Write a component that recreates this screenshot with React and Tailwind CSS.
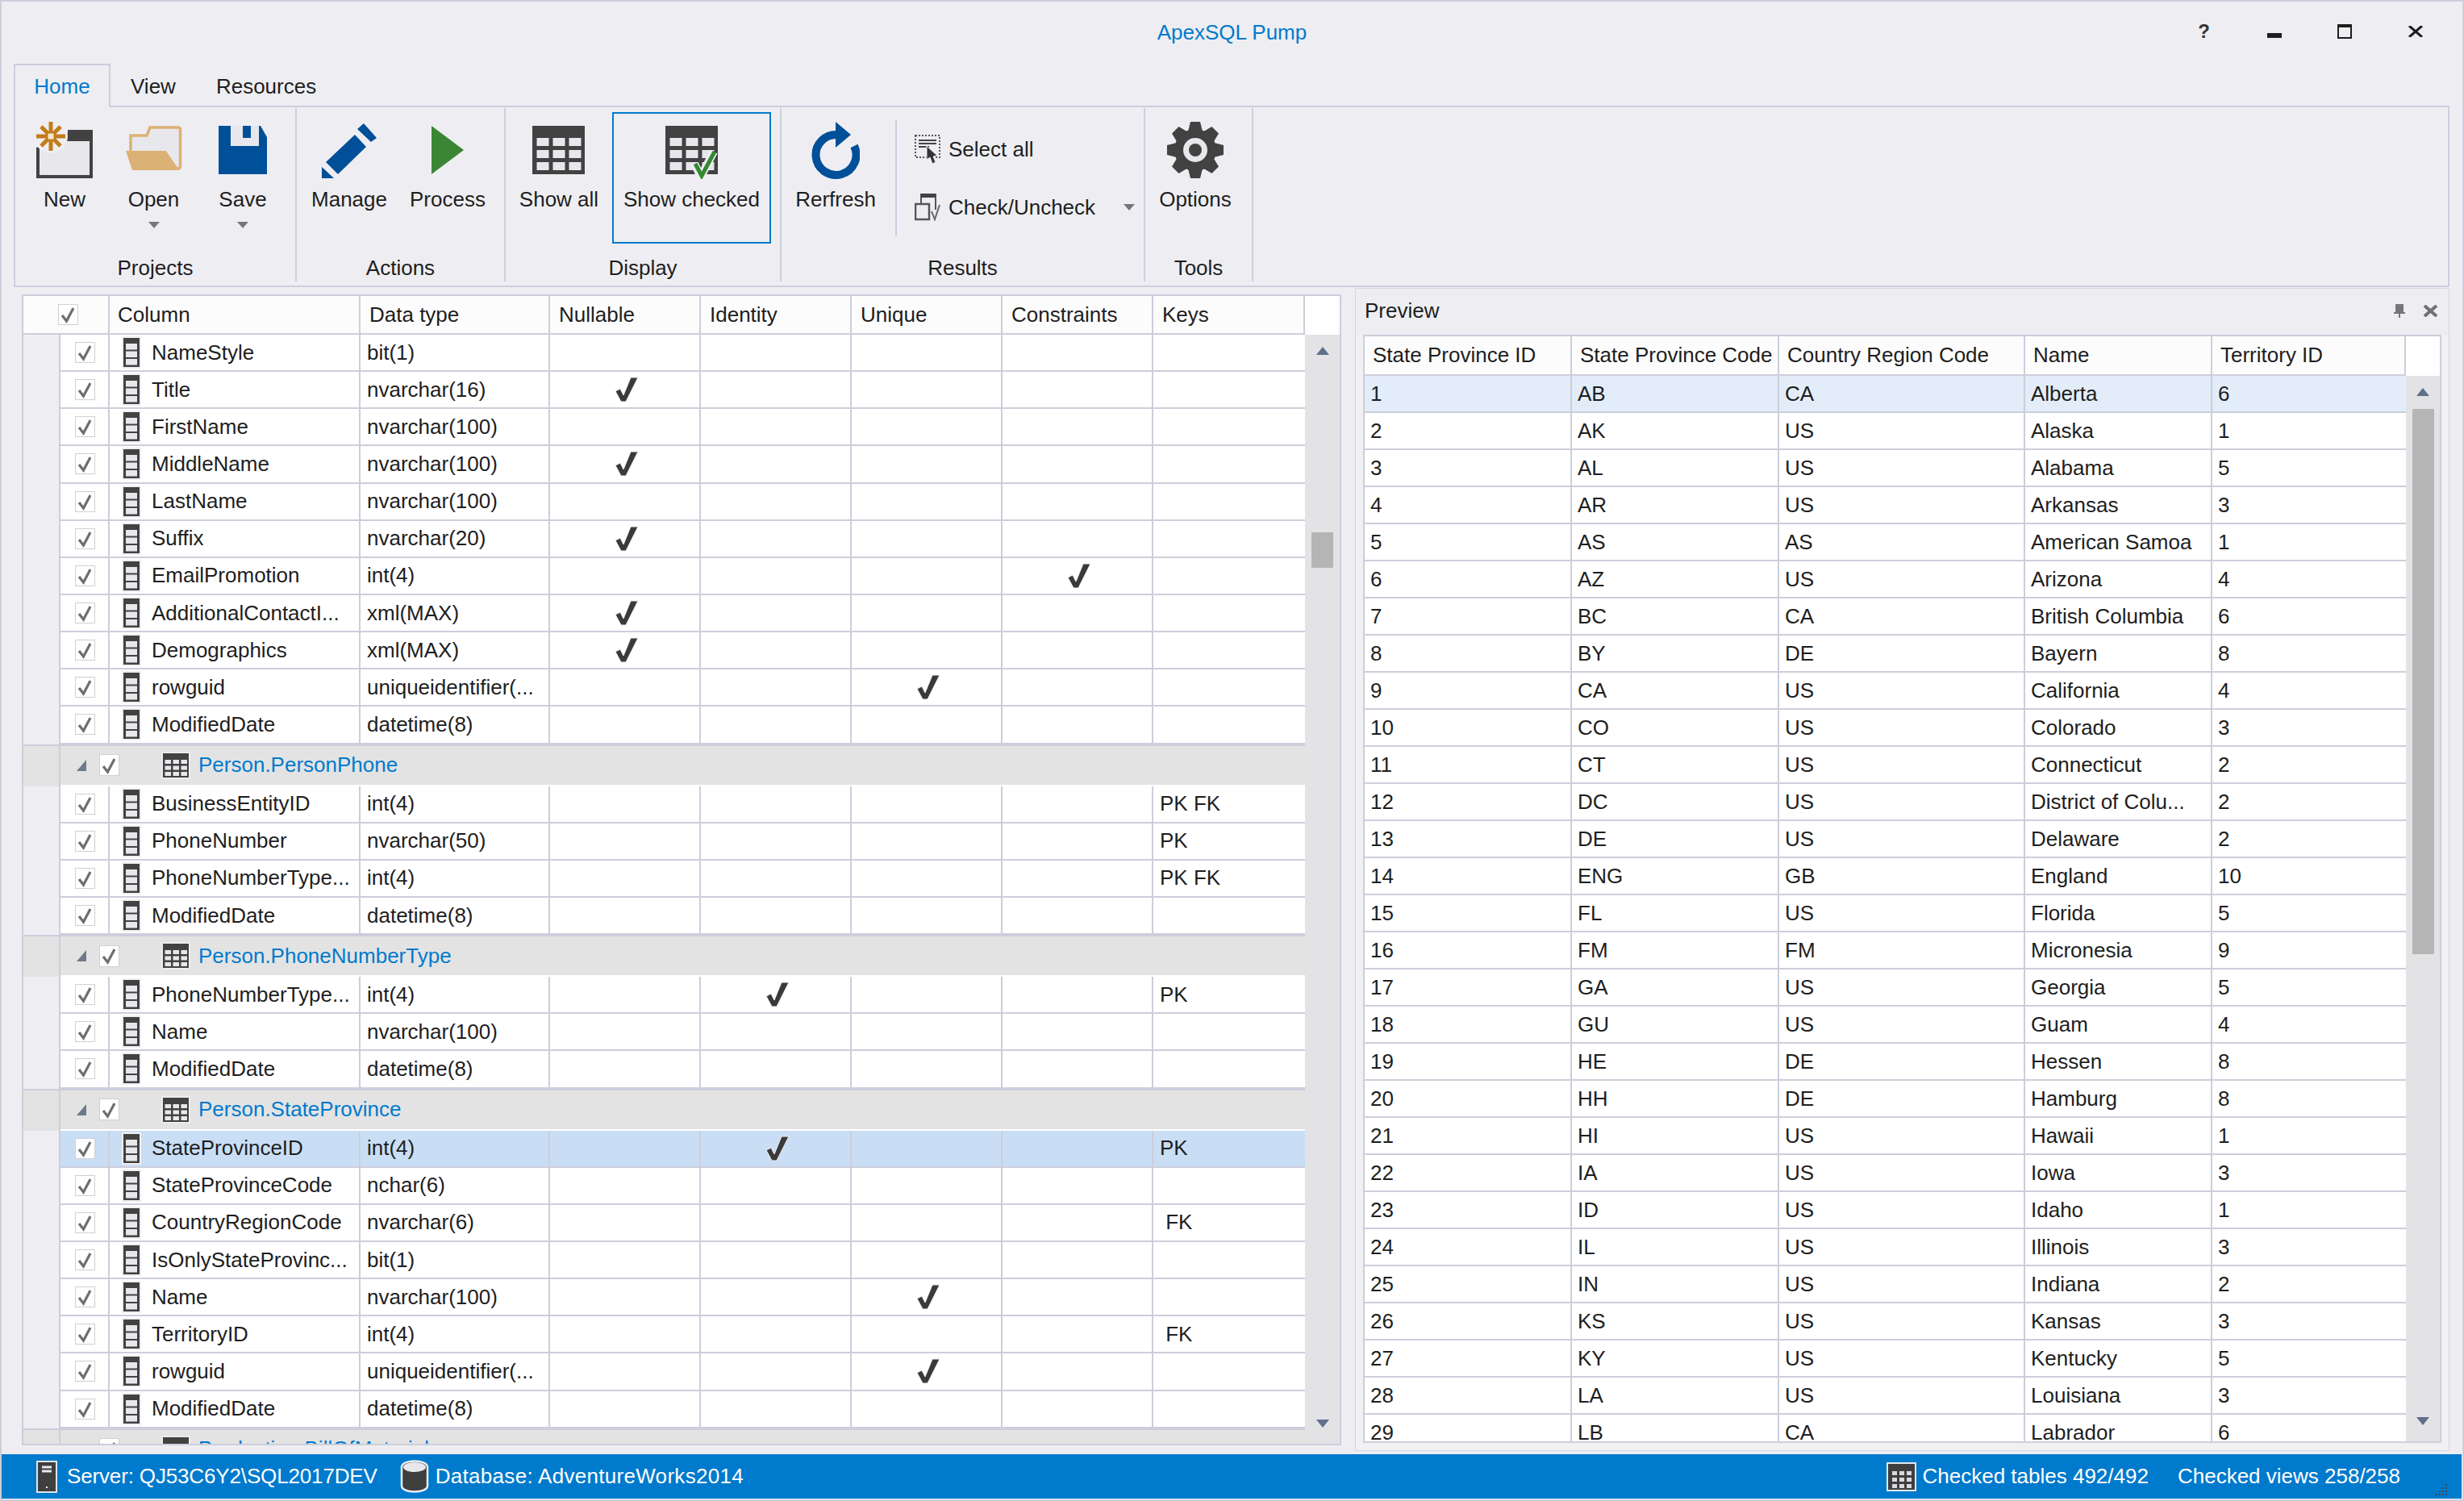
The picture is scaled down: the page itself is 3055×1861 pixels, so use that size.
import React from 'react'

const leftRows = [
  { name: 'NameStyle', type: 'bit(1)' },
  { name: 'Title', type: 'nvarchar(16)', nullable: true },
  { name: 'FirstName', type: 'nvarchar(100)' },
  { name: 'MiddleName', type: 'nvarchar(100)', nullable: true },
  { name: 'LastName', type: 'nvarchar(100)' },
  { name: 'Suffix', type: 'nvarchar(20)', nullable: true },
  { name: 'EmailPromotion', type: 'int(4)', constraints: true },
  { name: 'AdditionalContactI...', type: 'xml(MAX)', nullable: true },
  { name: 'Demographics', type: 'xml(MAX)', nullable: true },
  { name: 'rowguid', type: 'uniqueidentifier(...', unique: true },
  { name: 'ModifiedDate', type: 'datetime(8)' },
  { group: 'Person.PersonPhone' },
  { name: 'BusinessEntityID', type: 'int(4)', keys: 'PK FK' },
  { name: 'PhoneNumber', type: 'nvarchar(50)', keys: 'PK' },
  { name: 'PhoneNumberType...', type: 'int(4)', keys: 'PK FK' },
  { name: 'ModifiedDate', type: 'datetime(8)' },
  { group: 'Person.PhoneNumberType' },
  { name: 'PhoneNumberType...', type: 'int(4)', identity: true, keys: 'PK' },
  { name: 'Name', type: 'nvarchar(100)' },
  { name: 'ModifiedDate', type: 'datetime(8)' },
  { group: 'Person.StateProvince' },
  { name: 'StateProvinceID', type: 'int(4)', identity: true, keys: 'PK', selected: true },
  { name: 'StateProvinceCode', type: 'nchar(6)' },
  { name: 'CountryRegionCode', type: 'nvarchar(6)', keys: ' FK' },
  { name: 'IsOnlyStateProvinc...', type: 'bit(1)' },
  { name: 'Name', type: 'nvarchar(100)', unique: true },
  { name: 'TerritoryID', type: 'int(4)', keys: ' FK' },
  { name: 'rowguid', type: 'uniqueidentifier(...', unique: true },
  { name: 'ModifiedDate', type: 'datetime(8)' },
  { group: 'Production.BillOfMaterials' },
]

const previewRows = [
  ['1', 'AB', 'CA', 'Alberta', '6'],
  ['2', 'AK', 'US', 'Alaska', '1'],
  ['3', 'AL', 'US', 'Alabama', '5'],
  ['4', 'AR', 'US', 'Arkansas', '3'],
  ['5', 'AS', 'AS', 'American Samoa', '1'],
  ['6', 'AZ', 'US', 'Arizona', '4'],
  ['7', 'BC', 'CA', 'British Columbia', '6'],
  ['8', 'BY', 'DE', 'Bayern', '8'],
  ['9', 'CA', 'US', 'California', '4'],
  ['10', 'CO', 'US', 'Colorado', '3'],
  ['11', 'CT', 'US', 'Connecticut', '2'],
  ['12', 'DC', 'US', 'District of Colu...', '2'],
  ['13', 'DE', 'US', 'Delaware', '2'],
  ['14', 'ENG', 'GB', 'England', '10'],
  ['15', 'FL', 'US', 'Florida', '5'],
  ['16', 'FM', 'FM', 'Micronesia', '9'],
  ['17', 'GA', 'US', 'Georgia', '5'],
  ['18', 'GU', 'US', 'Guam', '4'],
  ['19', 'HE', 'DE', 'Hessen', '8'],
  ['20', 'HH', 'DE', 'Hamburg', '8'],
  ['21', 'HI', 'US', 'Hawaii', '1'],
  ['22', 'IA', 'US', 'Iowa', '3'],
  ['23', 'ID', 'US', 'Idaho', '1'],
  ['24', 'IL', 'US', 'Illinois', '3'],
  ['25', 'IN', 'US', 'Indiana', '2'],
  ['26', 'KS', 'US', 'Kansas', '3'],
  ['27', 'KY', 'US', 'Kentucky', '5'],
  ['28', 'LA', 'US', 'Louisiana', '3'],
  ['29', 'LB', 'CA', 'Labrador', '6'],
]

const leftGrid = 'grid grid-cols-[46px_61px_311px_235px_187px_187px_187px_187px_188px]'
const previewGrid = 'grid grid-cols-[257px_257px_305px_232px_240px]'
const line = 'border-r-2 border-[#cccedb]'

function Arrow() {
  return (
    <svg width="14" height="8" viewBox="0 0 14 8">
      <path d="M0 0H14L7 8Z" fill="#777" />
    </svg>
  )
}

function Check({ className = 'w-[25px] h-[26px]' }) {
  return (
    <div className={`${className} bg-white border border-[#cfcfd6] flex items-center justify-center shrink-0`}>
      <svg width="21" height="22" viewBox="0 0 21 22">
        <path d="M3 12L8.500 19L17 3" fill="none" stroke="#6e6e6e" strokeWidth="3.200" />
      </svg>
    </div>
  )
}

function Tick() {
  return (
    <svg width="34" height="34" viewBox="0 0 34 34">
      <path d="M3 19L9 16L13 24L22 2H31L16 32H10Z" fill="#3a3a3a" stroke="#f2f2f2" strokeWidth="1" />
    </svg>
  )
}

function ColumnIcon() {
  return (
    <svg width="24" height="40" viewBox="0 0 24 40" className="shrink-0">
      <rect width="24" height="40" fill="#efeff1" />
      <rect x="2" y="2" width="20" height="36" fill="#424242" />
      <rect x="5" y="9" width="14" height="7.500" fill="#e8e8ec" />
      <rect x="5" y="18.500" width="14" height="7.500" fill="#e8e8ec" />
      <rect x="5" y="28" width="14" height="7.500" fill="#e8e8ec" />
    </svg>
  )
}

function TableIcon({ halo = '#ececee' }) {
  const xs = [3, 13, 23]
  const ys = [10, 17.5, 25]
  return (
    <svg width="36" height="34" viewBox="0 0 36 34" className="shrink-0">
      <rect width="36" height="34" fill={halo} />
      <rect x="2" y="2" width="32" height="30" fill="#424242" />
      {ys.map((y) => xs.map((x) => <rect key={`${x}-${y}`} x={x + 1.5} y={y} width="7.500" height="5" fill="#e8e8ec" />))}
    </svg>
  )
}

function GridIcon({ checked }) {
  const xs = [5.5, 25.5, 45.5]
  const ys = [15, 30, 45]
  return (
    <svg width="66" height="66" viewBox="0 0 66 66">
      <rect x="0" y="0" width="65" height="60" fill="#424242" />
      {ys.map((y) => xs.map((x) => <rect key={`${x}-${y}`} x={x} y={y} width="15" height="10" fill="#e8e8ec" />))}
      {checked && (
        <>
          <path d="M36 47L44 63L60 32" fill="none" stroke="#eeeef2" strokeWidth="10" />
          <path d="M37 47L45 62L61 32" fill="none" stroke="#34892f" strokeWidth="5" />
        </>
      )}
    </svg>
  )
}

function NewIcon() {
  return (
    <svg width="70" height="70" viewBox="0 0 70 70">
      <rect x="0" y="10" width="70" height="60" fill="#424242" />
      <rect x="4" y="24" width="62" height="42" fill="#e8e8ec" />
      <path d="M0 0H40V10H39V14L0 32Z" fill="#eeeef2" />
      <circle cx="18" cy="18" r="21" fill="#eeeef2" />
      <path d="M18 0V36M0 18H36M6 6L30 30M30 6L6 30" stroke="#c27c1a" strokeWidth="5" />
      <rect x="14.500" y="14.500" width="7" height="7" fill="#f3e6cf" />
    </svg>
  )
}

function OpenIcon() {
  return (
    <svg width="70" height="56" viewBox="0 0 70 56">
      <path d="M6 36V12H26L30 2H65Q67.500 2 67.500 5V50Q67.500 53 65 53H40Z" fill="#e8e8ec" stroke="#dcb175" strokeWidth="3.500" />
      <path d="M0 31H50L66 55H8Z" fill="#dcb175" />
    </svg>
  )
}

function SaveIcon() {
  return (
    <svg width="60" height="60" viewBox="0 0 60 60">
      <path d="M0 0H52L60 14V60H0Z" fill="#004f99" />
      <rect x="15" y="0" width="35" height="25" fill="#e8e8ec" />
      <rect x="30" y="0" width="10" height="15" fill="#004f99" />
    </svg>
  )
}

function PencilIcon() {
  return (
    <svg width="68" height="68" viewBox="0 0 68 68" fill="#004f99">
      <path d="M52 0L68 18L61 23L44 7Z" />
      <path d="M41 14L55 29L20 63L5 48Z" />
      <path d="M0 54L15 68H0Z" />
    </svg>
  )
}

function RefreshIcon() {
  return (
    <svg width="60" height="72" viewBox="0 0 60 72">
      <path d="M32 16A25 25 0 1 0 53 30" fill="none" stroke="#004f99" strokeWidth="10" />
      <path d="M30 0L49 16L30 32Z" fill="#004f99" />
    </svg>
  )
}

function GearIcon() {
  const angles = [0, 45, 90, 135, 180, 225, 270, 315]
  return (
    <svg width="70" height="70" viewBox="0 0 70 70">
      {angles.map((a) => (
        <path key={a} d="M29 0H41L44 12H26Z" fill="#424242" transform={`rotate(${a} 35 35)`} />
      ))}
      <circle cx="35" cy="35" r="26" fill="#424242" />
      <circle cx="35" cy="35" r="15" fill="#e8e8ec" />
      <circle cx="35" cy="35" r="8" fill="#424242" />
    </svg>
  )
}

function SelectAllIcon() {
  return (
    <svg width="32" height="36" viewBox="0 0 32 36">
      <rect x="1" y="1" width="30" height="27" fill="none" stroke="#555" strokeWidth="2" strokeDasharray="2 2" />
      <path d="M5 7H27M5 11H27M5 15H18" stroke="#444" strokeWidth="2" />
      <path d="M15 14L15 31L19 28L22 36L26 34L23 27L28 26Z" fill="#333" stroke="#eeeef2" strokeWidth="1" />
    </svg>
  )
}

function CheckUncheckIcon() {
  return (
    <svg width="32" height="34" viewBox="0 0 32 34">
      <path d="M8 13V1H26V20" fill="none" stroke="#555" strokeWidth="2" />
      <rect x="8" y="0" width="18" height="5" fill="#424242" />
      <rect x="1" y="13" width="17" height="19" fill="#eeeef2" stroke="#555" strokeWidth="2.500" />
      <path d="M21 22L25 32L31 14" fill="none" stroke="#666" strokeWidth="2" />
    </svg>
  )
}

function BigButton({ width, icon, iconTop = '', label, arrow, active }) {
  return (
    <div className={`${width} h-[163px] flex flex-col items-center pt-[10px] border-2 shrink-0 ${active ? 'border-[#007acc]' : 'border-transparent'}`}>
      <div className={`h-[74px] flex items-start justify-center ${iconTop}`}>{icon}</div>
      <div className="mt-[7px] leading-[30px] whitespace-nowrap">{label}</div>
      {arrow && <div className="mt-[13px] h-[8px] flex"><Arrow /></div>}
    </div>
  )
}

function RibbonGroup({ width, label, className = '', children }) {
  return (
    <div className={`${width} h-[215px] flex flex-col border-r-2 border-[#cccedb] shrink-0`}>
      <div className={`h-[163px] mt-[5px] flex ${className}`}>{children}</div>
      <div className="mt-[15px] leading-[30px] text-center">{label}</div>
    </div>
  )
}

function Ribbon() {
  return (
    <div className="ml-[15px] w-[3020px] h-[225px] border-2 border-[#cccedb] flex items-start">
      <div className="flex mt-[1px]">
        <RibbonGroup width="w-[349px]" label="Projects" className="pl-[5px]">
          <BigButton width="w-[112px]" icon={<NewIcon />} label="New" />
          <BigButton width="w-[109px]" icon={<OpenIcon />} iconTop="pt-[5px]" label="Open" arrow />
          <BigButton width="w-[112px]" icon={<SaveIcon />} iconTop="pt-[5px]" label="Save" arrow />
        </RibbonGroup>
        <RibbonGroup width="w-[259px]" label="Actions" className="pl-[5px]">
          <BigButton width="w-[120px]" icon={<PencilIcon />} iconTop="pt-[2px]" label="Manage" />
          <BigButton width="w-[124px]" icon={<svg width="40" height="60" viewBox="0 0 40 60"><path d="M0 0L40 30L0 60Z" fill="#3b8635" /></svg>} iconTop="pt-[5px]" label="Process" />
        </RibbonGroup>
        <RibbonGroup width="w-[342px]" label="Display" className="pl-[3px] gap-[3px]">
          <BigButton width="w-[126px]" icon={<GridIcon />} iconTop="pt-[5px]" label="Show all" />
          <BigButton width="w-[197px]" icon={<GridIcon checked />} iconTop="pt-[5px]" label="Show checked" active />
        </RibbonGroup>
        <RibbonGroup width="w-[451px]" label="Results" className="pl-[3px]">
          <BigButton width="w-[128px]" icon={<RefreshIcon />} label="Rerfresh" />
          <div className="ml-[10px] mt-[10px] h-[144px] border-l-2 border-[#cccedb]" />
          <div className="ml-[22px] flex flex-col pt-[26px] gap-[32px]">
            <div className="h-[40px] flex items-center gap-[10px]">
              <SelectAllIcon />
              <span>Select all</span>
            </div>
            <div className="h-[40px] flex items-center gap-[10px]">
              <CheckUncheckIcon />
              <span className="w-[207px] whitespace-nowrap">Check/Uncheck</span>
              <Arrow />
            </div>
          </div>
        </RibbonGroup>
        <RibbonGroup width="w-[134px]" label="Tools">
          <BigButton width="w-[124px]" icon={<GearIcon />} label="Options" />
        </RibbonGroup>
      </div>
    </div>
  )
}

function ScrollBar({ thumb }) {
  return (
    <div className="flex-1 bg-[#e3e3e6] flex flex-col items-center relative pt-[15px]">
      <svg width="16" height="10" viewBox="0 0 16 10" className="shrink-0"><path d="M8 0L16 10H0Z" fill="#5f6f8c" /></svg>
      <div className={thumb} />
      <svg width="16" height="10" viewBox="0 0 16 10" className="shrink-0 mt-auto mb-[20px]"><path d="M0 0H16L8 10Z" fill="#5f6f8c" /></svg>
    </div>
  )
}

function LeftRow({ row }) {
  if (row.group) {
    return (
      <div className="h-[52px] shrink-0 flex bg-[#e3e3e4] border-t-2 border-[#cccedb]">
        <div className="w-[46px] border-r-2 border-[#cccedb]" />
        <div className="flex-1 flex items-center border-b-2 border-white">
          <svg width="12" height="14" viewBox="0 0 12 14" className="ml-[20px]"><path d="M12 0V14H0Z" fill="#6f7a88" /></svg>
          <div className="ml-[16px]"><Check className="w-[25px] h-[27px]" /></div>
          <div className="ml-[52px]"><TableIcon /></div>
          <span className="ml-[10px] text-[#007acc]">{row.group}</span>
        </div>
      </div>
    )
  }
  const bg = row.selected ? 'bg-[#c9def5]' : 'bg-white'
  return (
    <div className={`${leftGrid} h-[46.15px] shrink-0`}>
      <div className={`bg-[#eeeef2] ${line}`} />
      <div className={`${bg} ${line} border-b-2 flex items-center pl-[18px]`}><Check /></div>
      <div className={`${bg} ${line} border-b-2 flex items-center pl-[15px] gap-[13px] whitespace-nowrap`}>
        <ColumnIcon />
        <span>{row.name}</span>
      </div>
      <div className={`${bg} ${line} border-b-2 flex items-center pl-[8px] whitespace-nowrap`}>{row.type}</div>
      {[row.nullable, row.identity, row.unique, row.constraints].map((on, i) => (
        <div key={i} className={`${bg} ${line} border-b-2 flex items-center justify-center pl-[5px]`}>{on && <Tick />}</div>
      ))}
      <div className={`${bg} border-b-2 border-[#cccedb] flex items-center pl-[8px] whitespace-pre`}>{row.keys}</div>
    </div>
  )
}

function LeftPanel() {
  const heads = ['Column', 'Data type', 'Nullable', 'Identity', 'Unique', 'Constraints', 'Keys']
  return (
    <div className="w-[1636px] h-[1427px] mt-[9px] ml-[25px] border-2 border-[#cccedb] flex flex-col overflow-hidden shrink-0">
      <div className="flex h-[48px] shrink-0 bg-[#fcfcfc]">
        <div className={`${leftGrid} w-[1589px] border-b-2 border-[#cccedb]`}>
          <div className={`col-span-2 flex items-center pl-[43px] ${line}`}><Check /></div>
          {heads.map((h, i) => (
            <div key={h} className={`flex items-center ${i === 0 ? 'pl-[10px]' : 'pl-[11px]'} ${line}`}>{h}</div>
          ))}
        </div>
        <div className="flex-1 bg-white" />
      </div>
      <div className="flex flex-1 min-h-0">
        <div className="w-[1589px] flex flex-col overflow-hidden">
          {leftRows.map((row, i) => (
            <LeftRow key={i} row={row} />
          ))}
        </div>
        <ScrollBar thumb="w-[27px] h-[44px] bg-[#b5b5b5] mt-[220px]" />
      </div>
    </div>
  )
}

function PreviewPanel() {
  const heads = ['State Province ID', 'State Province Code', 'Country Region Code', 'Name', 'Territory ID']
  return (
    <div className="w-[1357px] h-[1442px] mt-[1px] ml-[17px] border border-[#d5d6e0] bg-[#f1f1f3] flex flex-col shrink-0">
      <div className="h-[57px] bg-[#eeeef2] flex items-center pl-[11px] pr-[13px] pb-[3px] shrink-0">
        <span>Preview</span>
        <svg width="14" height="17" viewBox="0 0 14 17" className="ml-auto">
          <path d="M2 0H12V10H14V12H8V17H6V12H0V10H2Z" fill="#777" />
        </svg>
        <svg width="19" height="15" viewBox="0 0 19 15" className="ml-[22px]">
          <path d="M2 1L17 14M17 1L2 14" stroke="#707070" strokeWidth="4" />
        </svg>
      </div>
      <div className="ml-[9px] w-[1337px] h-[1374px] border-2 border-[#cccedb] flex flex-col overflow-hidden">
        <div className="flex h-[49px] shrink-0 bg-[#fcfcfc]">
          <div className={`${previewGrid} w-[1291px] border-b-2 border-[#cccedb]`}>
            {heads.map((h) => (
              <div key={h} className={`flex items-center pl-[10px] whitespace-nowrap ${line}`}>{h}</div>
            ))}
          </div>
          <div className="flex-1 bg-white" />
        </div>
        <div className="flex flex-1 min-h-0">
          <div className="w-[1291px] flex flex-col overflow-hidden">
            {previewRows.map((row, i) => (
              <div key={row[0]} className={`${previewGrid} h-[46px] shrink-0 border-b-2 border-[#cccedb] ${i === 0 ? 'bg-[#e3edf9]' : 'bg-white'}`}>
                {row.map((v, j) => (
                  <div key={j} className={`flex items-center pl-[7px] whitespace-nowrap ${j < 4 ? line : ''}`}>{v}</div>
                ))}
              </div>
            ))}
          </div>
          <ScrollBar thumb="w-[27px] h-[676px] bg-[#b5b5b5] mt-[16px]" />
        </div>
      </div>
    </div>
  )
}

function StatusBar() {
  return (
    <div className="h-[55px] w-[3050px] bg-[#007acc] text-white flex items-center pl-[43px] shrink-0 relative">
      <svg width="26" height="40" viewBox="0 0 26 40">
        <rect x="1" y="1" width="24" height="38" fill="#3f3f3f" stroke="#dfe6ec" strokeWidth="2" />
        <path d="M7 8H19M7 13H19" stroke="#e8e8ec" strokeWidth="3" />
        <rect x="12" y="32" width="2" height="2" fill="#e8e8ec" />
      </svg>
      <span className="ml-[12px] tracking-[-0.15px]">Server: QJ53C6Y2\SQL2017DEV</span>
      <svg width="36" height="41" viewBox="0 0 36 41" className="ml-[28px]">
        <path d="M2 9C2 4 10 1.500 18 1.500S34 4 34 9V32C34 37 26 39.500 18 39.500S2 37 2 32Z" fill="#3f3f3f" stroke="#e8edf2" strokeWidth="2.500" />
        <ellipse cx="18" cy="9" rx="14" ry="6" fill="#e8e8ec" />
      </svg>
      <span className="ml-[8px] tracking-[0.3px]">Database: AdventureWorks2014</span>
      <div className="ml-auto mr-[76px] flex items-center">
        <svg width="37" height="36" viewBox="0 0 37 36">
          <rect x="1" y="1" width="35" height="34" fill="#3f3f3f" stroke="#dfe6ec" strokeWidth="2" />
          <path d="M7 11h6v5H7zM16 11h6v5h-6zM25 11h6v5h-6zM7 19h6v5H7zM16 19h6v5h-6zM25 19h6v5h-6zM7 27h6v5H7zM16 27h6v5h-6zM25 27h6v5h-6z" fill="#d9d9de" />
        </svg>
        <span className="ml-[8px]">Checked tables 492/492</span>
        <span className="ml-[36px]">Checked views 258/258</span>
      </div>
      <svg width="14" height="15" viewBox="0 0 14 15" className="absolute right-[18px] bottom-[3px]">
        <path d="M12 0h2v2h-2zM12 4h2v2h-2zM8 4h2v2H8zM12 8h2v2h-2zM8 8h2v2H8zM4 8h2v2H4zM12 12h2v2h-2zM8 12h2v2H8zM4 12h2v2H4zM0 12h2v2H0z" fill="#33475a" />
      </svg>
    </div>
  )
}

export default function App() {
  return (
    <div className="w-[3055px] h-[1861px] bg-[#eeeef2] border-2 border-[#cccedb] flex flex-col overflow-hidden font-['Liberation_Sans',sans-serif] text-[26px] text-[#1e1e1e]">
      <div className="h-[77px] shrink-0 flex items-center justify-center relative">
        <span className="text-[#007acc] -mt-[1px]">ApexSQL Pump</span>
        <div className="absolute right-[49px] top-0 bottom-0 flex items-center -mt-[3px]">
          <span className="font-bold text-[24px] text-[#333] mr-[71px]">?</span>
          <div className="w-[18px] h-[6px] bg-[#1e1e1e] mt-[10px] mr-[69px]" />
          <div className="w-[18px] h-[18px] border-2 border-t-[4px] border-[#1e1e1e] mr-[70px]" />
          <svg width="18" height="14" viewBox="0 0 18 14"><path d="M1 0L17 14M17 0L1 14" stroke="#1e1e1e" strokeWidth="3" /></svg>
        </div>
      </div>
      <div className="h-[52px] shrink-0 flex ml-[15px] relative z-10">
        <div className="w-[120px] h-[54px] border-2 border-b-0 border-[#cccedb] bg-[#eeeef2] flex items-center justify-center text-[#007acc]">Home</div>
        <span className="ml-[25px] leading-[57px]">View</span>
        <span className="ml-[50px] leading-[57px]">Resources</span>
      </div>
      <Ribbon />
      <div className="flex flex-1 min-h-0">
        <LeftPanel />
        <PreviewPanel />
      </div>
      <StatusBar />
      <div className="h-[1px] shrink-0" />
    </div>
  )
}
